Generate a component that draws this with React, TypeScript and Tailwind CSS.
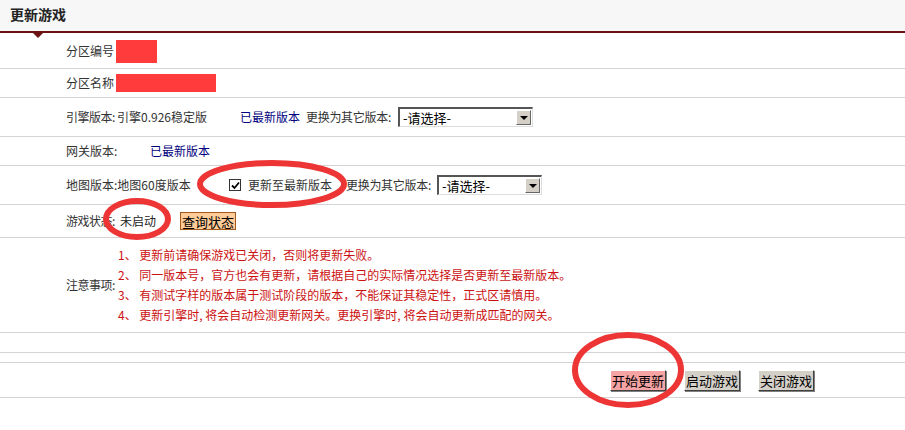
import React from "react";

const font = { fontFamily: '"Noto Sans CJK SC", "Liberation Sans", sans-serif' };

function Select({ w }: { w: number }) {
  return (
    <div
      className="flex h-[20px] shrink-0 items-stretch border-t-2 border-l-2 border-b border-r border-t-[#555] border-l-[#555] border-b-[#ddd] border-r-[#ddd] bg-white"
      style={{ width: w }}
    >
      <div className="flex flex-1 items-center pl-[3px] text-[13px] leading-none text-black">-请选择-</div>
      <div className="m-[1px] flex w-[15px] items-center justify-center border border-t-white border-l-white border-b-[#666] border-r-[#666] bg-[#d4d0c8]">
        <div className="h-0 w-0 border-l-[4px] border-r-[4px] border-t-[4px] border-l-transparent border-r-transparent border-t-black" />
      </div>
    </div>
  );
}

function Btn({ children, bg }: { children: React.ReactNode; bg: string }) {
  return (
    <div
      className={`flex h-[21px] shrink-0 items-center border border-t-white border-l-white border-b-[#404040] border-r-[#404040] px-[1px] text-[13px] leading-none text-black shadow-[1px_1px_0_#808080] ${bg}`}
    >
      {children}
    </div>
  );
}

export default function App() {
  return (
    <div className="relative w-[905px] h-[430px] whitespace-nowrap bg-white text-[12px] text-[#333]" style={font}>
      <div className="flex h-[33px] items-center border-b-2 border-[#6a1111] bg-[#f7f7f7] pl-[10px] pb-[2px]">
        <span className="text-[14px] font-bold text-[#222]">更新游戏</span>
      </div>
      <div className="absolute left-[33px] top-[33px] h-0 w-0 border-l-[5px] border-r-[5px] border-t-[5px] border-l-transparent border-r-transparent border-t-[#6a1111]" />

      <div className="flex h-[36px] items-center border-b border-[#d4d4d4] pl-[66px]">
        <span className="w-[50px] shrink-0">分区编号</span>
        <div className="mt-[1px] h-[23px] w-[41px] bg-[#ff3b3b]" />
      </div>
      <div className="flex h-[29px] items-center border-b border-[#d4d4d4] pl-[66px]">
        <span className="w-[50px] shrink-0">分区名称</span>
        <div className="h-[18px] w-[100px] bg-[#ff3b3b]" />
      </div>
      <div className="flex h-[39px] items-center border-b border-[#d4d4d4] pl-[66px]">
        <span className="w-[51px] shrink-0 tracking-[-0.5px]">引擎版本:</span>
        <span className="w-[123px] shrink-0">引擎0.926稳定版</span>
        <span className="w-[66px] shrink-0 text-[#000080]">已最新版本</span>
        <span className="w-[92px] shrink-0 tracking-[-0.3px]">更换为其它版本:</span>
        <Select w={135} />
      </div>
      <div className="flex h-[29px] items-center border-b border-[#d4d4d4] pl-[66px]">
        <span className="w-[84px] shrink-0">网关版本:</span>
        <span className="text-[#000080]">已最新版本</span>
      </div>
      <div className="flex h-[39px] items-center border-b border-[#d4d4d4] pl-[66px]">
        <span className="w-[163px] shrink-0">地图版本:地图60度版本</span>
        <div className="mr-[7px] flex h-[12px] w-[12px] shrink-0 items-center justify-center border border-[#333] bg-white">
          <svg width="9" height="9" viewBox="0 0 9 9">
            <path d="M1 4.5 L3.5 7 L8 1.5" stroke="#000" strokeWidth="1.8" fill="none" />
          </svg>
        </div>
        <span className="w-[98px] shrink-0">更新至最新版本</span>
        <span className="w-[91px] shrink-0 tracking-[-0.3px]">更换为其它版本:</span>
        <Select w={105} />
      </div>
      <div className="flex h-[33px] items-center border-b border-[#d4d4d4] pl-[66px]">
        <span className="w-[51px] shrink-0 tracking-[-0.5px]">游戏状态:</span>
        <span className="ml-[3px] w-[60px] shrink-0 text-[#222]">未启动</span>
        <div className="flex h-[18px] shrink-0 items-center border border-[#a35a1a] bg-[#ffcc99] px-[1px] text-[13px] leading-none text-black">
          查询状态
        </div>
      </div>
      <div className="flex h-[95px] items-center border-b border-[#d4d4d4] pl-[66px]">
        <span className="w-[52px] shrink-0 tracking-[-0.5px]">注意事项:</span>
        <div className="flex flex-col gap-[4px] text-[#cc1111] leading-[16px]">
          <span>1、 更新前请确保游戏已关闭，否则将更新失败。</span>
          <span>2、 同一版本号，官方也会有更新，请根据自己的实际情况选择是否更新至最新版本。</span>
          <span>3、 有测试字样的版本属于测试阶段的版本，不能保证其稳定性，正式区请慎用。</span>
          <span>4、 更新引擎时, 将会自动检测更新网关。更换引擎时, 将会自动更新成匹配的网关。</span>
        </div>
      </div>
      <div className="h-[20px] border-b border-[#d4d4d4]" />
      <div className="h-[10px] border-b border-[#d4d4d4]" />
      <div className="flex h-[35px] items-center gap-[18px] border-b border-[#d4d4d4] pl-[610px]">
        <Btn bg="bg-[#f5a3a3]">开始更新</Btn>
        <Btn bg="bg-[#d4d0c8]">启动游戏</Btn>
        <Btn bg="bg-[#d4d0c8]">关闭游戏</Btn>
      </div>

      <svg className="pointer-events-none absolute left-0 top-0" width="905" height="430">
        <ellipse cx="272" cy="184" rx="72" ry="21" fill="none" stroke="#ee3535" strokeWidth="6" />
        <ellipse cx="137" cy="219" rx="31" ry="18" fill="none" stroke="#ee3535" strokeWidth="6" />
        <ellipse cx="628" cy="370" rx="53" ry="35" fill="none" stroke="#ee3535" strokeWidth="6" />
      </svg>
    </div>
  );
}
